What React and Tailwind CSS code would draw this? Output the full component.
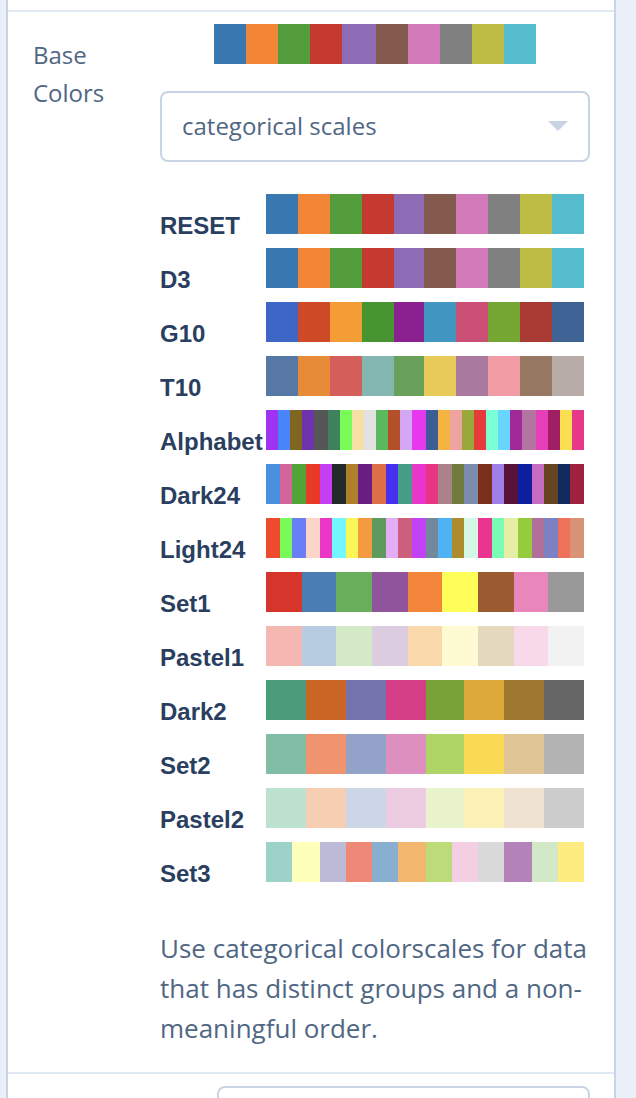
const D3 = ['#3a78b1','#f28636','#539d3d','#c43a31','#8e6bb5','#855a4e','#d37bba','#808080','#bdbc45','#55bcce'];

const ROWS = [
  ['RESET', D3],
  ['D3', D3],
  ['G10', ['#3e66c6','#ce4a26','#f49d37','#479530','#8b2090','#4197c2','#cc5076','#75a632','#a93a34','#3e6394']],
  ['T10', ['#5778a5','#e78b39','#d5605b','#84b6b1','#69a05a','#e8ca58','#ab7aa0','#f29da6','#967862','#b7aca7']],
  ['Alphabet', ['#9e33f2','#4885f9','#806621','#6e33ac','#565656','#3e825d','#7bfb58','#f5e0a6','#e2e2e2','#5cb85c','#b34f29','#d4a7f5','#e639ef','#3c5d96','#f5b341','#eda4a0','#98a83a','#e63b3a','#7affd4','#66d6fe','#a22a98','#b475a3','#e63eb8','#a01e66','#fae050','#e83688']],
  ['Dark24', ['#4a90e0','#d2669a','#50a335','#e83a28','#c63df4','#222a2a','#ad812a','#6b1e82','#dc6f46','#4630ef','#479c87','#e935c9','#e93384','#ab828a','#707b3e','#7b8cb0','#7a2e1c','#a07ee8','#591238','#0d1f9e','#c76ac2','#664420','#122b5e','#9e213f']],
  ['Light24', ['#ee4a2d','#78fb58','#6a7ef5','#fad5c8','#ea37c6','#72f6ff','#faf658','#f49b3f','#5e9a5f','#e3aef5','#cc5f7e','#c242f5','#72899b','#4fb2f2','#ad8c2d','#d5f7e6','#e93590','#7bfcb4','#e6eea6','#95cc3e','#b1709a','#7e80c4','#ed7259','#d89276']],
  ['Set1', ['#d5352b','#4a7db3','#69ae5a','#8f549c','#f3863a','#ffff5a','#9b5a30','#e987bc','#999999']],
  ['Pastel1', ['#f4b7b1','#b7cce0','#d3e9c8','#dccce0','#f9d9ab','#fefbd3','#e4d8bf','#f8d9e9','#f2f2f2']],
  ['Dark2', ['#4b9c7a','#ca6525','#7573ad','#d43e86','#78a138','#dda938','#9f762f','#666666']],
  ['Set2', ['#80bfa6','#f09470','#93a2c9','#dd90bf','#b0d567','#fad954','#e0c597','#b3b3b3']],
  ['Pastel2', ['#bce1ce','#f6cfb2','#ccd6e6','#edcbe1','#e9f4cd','#fcf2b8','#f0e2d0','#cccccc']],
  ['Set3', ['#9dd2c9','#ffffbc','#bdbad6','#ee8877','#89afd0','#f3b66e','#bddb78','#f4cfe4','#d9d9d9','#b382b8','#d3e8c6','#ffec80']],
];

function Bar({ colors, width }) {
  const edge = (k) => Math.round((k * width) / colors.length) * 2;
  return (
    <div className="flex h-10 shrink-0">
      {colors.map((c, i) => (
        <div key={i} style={{ backgroundColor: c, width: edge(i + 1) - edge(i) }} />
      ))}
    </div>
  );
}

export default function App() {
  return (
    <div className="h-[1098px] overflow-hidden bg-[#ebf0f8] pl-1.5 pr-5 font-['Open_Sans',sans-serif] text-2xl text-[#506784]">
      <div className="h-full border-x-2 border-[#c8d4e3] bg-white">
        <div className="h-3 border-b-2 border-[#dfe8f3]" />

        <div className="flex border-b-2 border-[#dfe8f3] pb-6">
          <div className="w-[152px] shrink-0 pl-[25px] pr-10 pt-6 leading-[38px]">Base Colors</div>

          <div className="w-[430px] shrink-0 pt-3">
            <div className="flex justify-center">
              <Bar colors={D3} width={161} />
            </div>

            <div className="mt-[27px] flex h-[71px] items-center justify-between rounded-lg border-2 border-[#c8d4e3] pb-0.5 pl-5 pr-5">
              <span>categorical scales</span>
              <svg width="20" height="10" viewBox="0 0 20 10" aria-hidden="true">
                <path d="M0 0h20L10 10z" fill="#c8d4e3" />
              </svg>
            </div>

            <div className="mt-8 flex flex-col gap-3.5">
              {ROWS.map(([name, colors]) => (
                <div key={name} className="flex h-10 items-baseline">
                  <div className="w-[106px] shrink-0 font-['Liberation_Sans',sans-serif] text-2xl font-bold leading-7 text-[#2a3f5f]">
                    {name}
                  </div>
                  <Bar colors={colors} width={colors.length === 10 ? 158.99 : 159} />
                </div>
              ))}
            </div>

            <p className="mt-[46px] text-[26px] leading-10">
              Use categorical colorscales for data that has distinct groups and a non-meaningful order.
            </p>
          </div>
        </div>

        <div className="flex justify-end pr-6 pt-3">
          <div className="h-[70px] w-[373px] rounded-lg border-2 border-[#c8d4e3]" />
        </div>
      </div>
    </div>
  );
}
